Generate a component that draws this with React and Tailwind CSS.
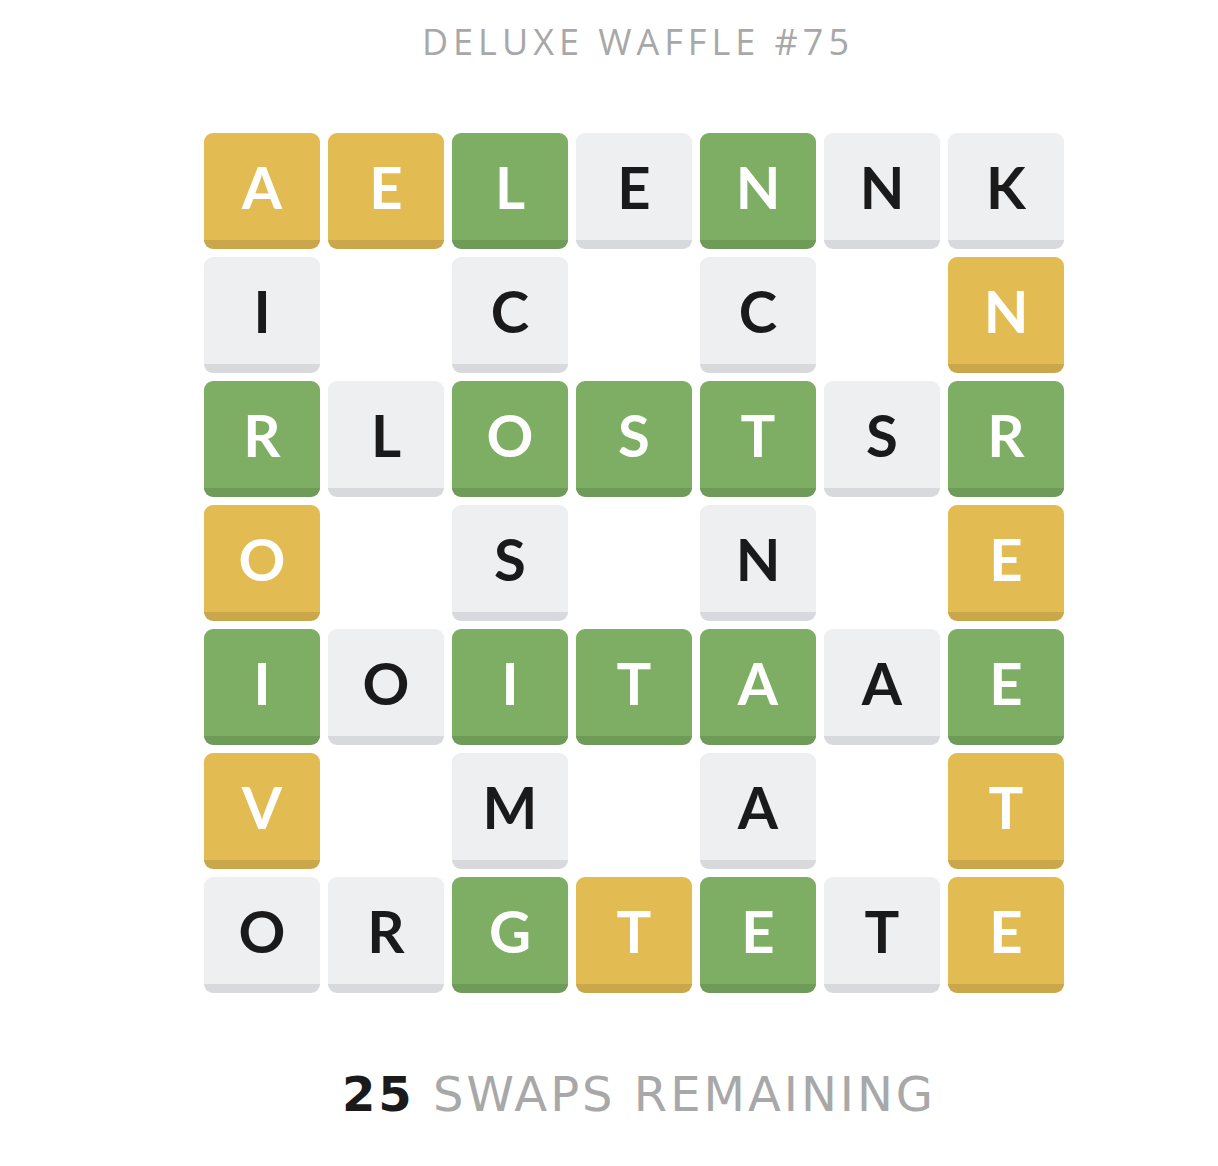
const rows = [
  "AyEyLgEwNgNwKw",
  "Iw..Cw..Cw..Ny",
  "RgLwOgSgTgSwRg",
  "Oy..Sw..Nw..Ey",
  "IgOwIgTgAgAwEg",
  "Vy..Mw..Aw..Ty",
  "OwRwGgTyEgTwEy",
];

const styles = {
  y: "bg-[#e2bc52] border-[#c9a74a] text-white",
  g: "bg-[#7eae64] border-[#6e9b57] text-white",
  w: "bg-[#eeeff1] border-[#d8d9dc] text-[#1a1a1a]",
};

function Tile({ letter, kind }) {
  if (letter === ".") return <div className="w-[116px] h-[116px]" />;
  return (
    <div
      className={`w-[116px] h-[116px] rounded-[9px] border-b-[9px] flex items-center justify-center text-[58px] font-bold ${styles[kind]}`}
      style={{ fontFamily: "Lato, 'Noto Sans', sans-serif" }}
    >
      {letter}
    </div>
  );
}

export default function App() {
  const cells = [];
  rows.forEach((r, ri) => {
    for (let i = 0; i < 7; i++) {
      cells.push(<Tile key={`${ri}-${i}`} letter={r[i * 2]} kind={r[i * 2 + 1]} />);
    }
  });
  return (
    <div className="w-[1218px] h-[1166px] bg-white flex flex-col items-center">
      <div
        className="mt-[22px] ml-[58px] text-[36px] leading-[40px] tracking-[5px] text-[#a8a8a8]"
        style={{ fontFamily: "'Open Sans', 'Noto Sans', sans-serif" }}
      >
        DELUXE WAFFLE #75
      </div>
      <div className="mt-[71px] ml-[50px] grid grid-cols-[repeat(7,116px)] gap-[8px]">{cells}</div>
      <div
        className="mt-[73px] ml-[60px] text-[48px] leading-[56px] tracking-[3px] text-[#a8a8a8]"
        style={{ fontFamily: "'DejaVu Sans', 'Noto Sans', sans-serif" }}
      >
        <span className="font-bold text-[#1a1a1a]">25</span> SWAPS REMAINING
      </div>
    </div>
  );
}
